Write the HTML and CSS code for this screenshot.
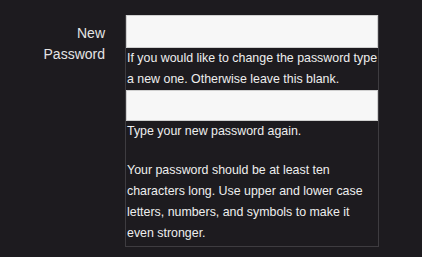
FILE: index.html
```
<!DOCTYPE html>
<html lang="en">
<head>
  <meta charset="UTF-8">
  <title>Change Password</title>
  <link rel="stylesheet" href="styles.css">
</head>
<body>
  <div class="form-row">
    <label class="field-label" for="new-password">New Password</label>
    <div class="field-box">
      <input type="password" id="new-password" class="pw-input">
      <p class="help">If you would like to change the password type a new one. Otherwise leave this blank.</p>
      <input type="password" id="confirm-password" class="pw-input pw-confirm">
      <p class="help">Type your new password again.</p>
      <p class="help help-last">Your password should be at least ten characters long. Use upper and lower case letters, numbers, and symbols to make it even stronger.</p>
    </div>
  </div>
</body>
</html>
```

FILE: styles.css
```
body {
  margin: 0;
  padding: 0;
  background-color: #1d1b1f;
  font-family: "Liberation Sans", Arial, sans-serif;
  color: #eeeeee;
}
.form-row {
  display: flex;
  padding-top: 15px;
}
.field-label {
  width: 125px;
  flex-shrink: 0;
  padding: 8px 20px 0 35px;
  box-sizing: border-box;
  text-align: right;
  font-size: 14px;
  line-height: 21px;
  color: #e4e4e4;
}
.field-box {
  width: 254px;
  box-sizing: border-box;
  border: 1px solid #3e3c40;
  border-top: none;
  padding-bottom: 2px;
}
.pw-input {
  display: block;
  width: 100%;
  height: 33px;
  margin: 0;
  box-sizing: border-box;
  border: 1px solid #d0d0d0;
  background: #f7f7f7;
  outline: none;
}
.pw-confirm {
  height: 31px;
}
.help {
  margin: 0;
  padding-left: 1px;
  font-size: 12.4px;
  line-height: 21px;
}
.help-last {
  margin-top: 18px;
}
```
